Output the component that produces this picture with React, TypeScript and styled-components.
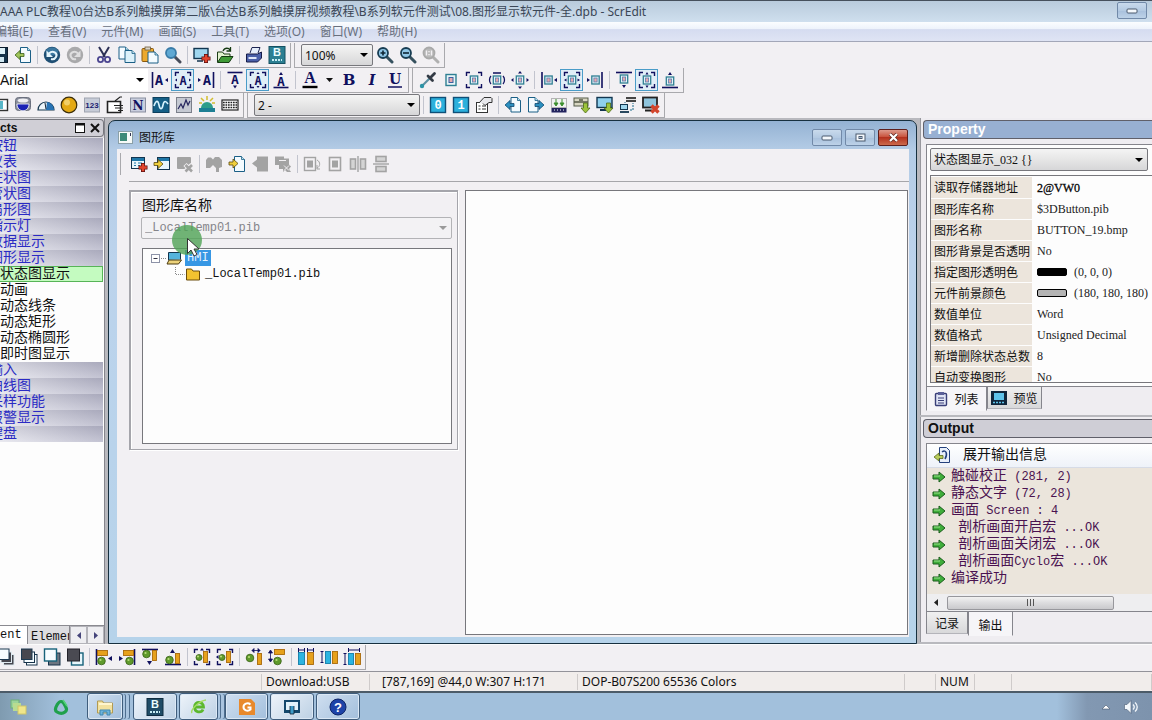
import React from "react";
import styled, { createGlobalStyle } from "styled-components";

const UI = `"Noto Sans", "Noto Sans CJK SC", sans-serif`;
const ARIAL = `"Liberation Sans", "Noto Sans CJK SC", sans-serif`;
const SONG = `"Liberation Mono", "Noto Sans CJK SC", monospace`;
const TIMES = `"Liberation Serif", "Noto Sans CJK SC", serif`;
const NAVY = "#10105e";
const GREY = "#a3a3a3";

const Global = createGlobalStyle`
  * { box-sizing: border-box; }
  body { margin: 0; background: #f2f0f3; font-family: ${UI}; font-size: 12px; color: #111; overflow: hidden; }
  button, select, input { font: inherit; color: inherit; margin: 0; padding: 0; border: 0; background: none; border-radius: 0; }
  svg { display: block; flex: none; }
`;

/* ---------- icon drawings, on an 18 x 18 grid ---------- */

const PlusRed = ({ x, y }: { x: number; y: number }) => (
  <>
    <path d={`M${x - 4.5} ${y}h9M${x} ${y - 4.5}v9`} stroke="#5a1010" strokeWidth="4" />
    <path d={`M${x - 3.8} ${y}h7.6M${x} ${y - 3.8}v7.6`} stroke="#e2452c" strokeWidth="2.6" />
  </>
);
const Win = ({ x = 1, y = 2, w = 13, h = 11 }: { x?: number; y?: number; w?: number; h?: number }) => (
  <>
    <rect x={x + 0.5} y={y + 0.5} width={w} height={h} fill="#e8f6fb" stroke="#12354f" />
    <rect x={x + 1} y={y + 1} width={w - 1} height="3" fill="#1f78a8" />
  </>
);
const Doc = ({ x, y, w = 9, h = 12, fill = "#f4fbff", stroke = "#1b5f86" }: { x: number; y: number; w?: number; h?: number; fill?: string; stroke?: string }) => (
  <>
    <path d={`M${x} ${y}h${w - 3}l3 3v${h - 3}h${-w}z`} fill={fill} stroke={stroke} />
    <path d={`M${x + w - 3} ${y}v3h3`} fill="#bfe3ef" stroke={stroke} strokeWidth=".8" />
  </>
);
const ArrowR = ({ x, y, c = "#f0cf3c", s = "#5b4a10" }: { x: number; y: number; c?: string; s?: string }) => (
  <path d={`M${x} ${y - 1.5}h4v-3l5 4.5l-5 4.5v-3h-4z`} fill={c} stroke={s} strokeWidth=".8" />
);
const ArrowL = ({ x, y, c = "#9fc45a", s = "#3c5f1a" }: { x: number; y: number; c?: string; s?: string }) => (
  <path d={`M${x + 9} ${y - 1.5}h-4v-3l-5 4.5l5 4.5v-3h4z`} fill={c} stroke={s} strokeWidth=".8" />
);
const Lens = ({ c = "#173c52", f = "#8fc6e6", sign = "", h = "#35505e" }: { c?: string; f?: string; sign?: string; h?: string }) => (
  <>
    <path d="M10.5 10.5l5.5 5.5" stroke={h} strokeWidth="3" strokeLinecap="round" />
    <circle cx="7" cy="7" r="5" fill={f} stroke={c} strokeWidth="1.8" />
    <path d={sign} stroke="#0d2433" strokeWidth="1.6" fill="none" />
  </>
);
const Brackets = ({ c = NAVY }: { c?: string }) => (
  <path d="M1.5 5v-3.5h3.5M13 1.5h3.5v3.5M16.5 13v3.5h-3.5M5 16.5h-3.5v-3.5" fill="none" stroke={c} strokeWidth="1.4" />
);
const LetterA = ({ x, y, s = 14 }: { x: number; y: number; s?: number }) => (
  <text x={x} y={y} fontFamily="DejaVu Sans Mono" fontWeight="bold" fontSize={s} textAnchor="middle" fill={NAVY}>A</text>
);
const Obj = ({ x = 9, y = 9 }: { x?: number; y?: number }) => (
  <>
    <rect x={x - 3.7} y={y - 4} width="7.4" height="8" fill="#e6f3f6" stroke="#2f7f93" strokeWidth="1.3" />
    <rect x={x - 1.6} y={y - 2} width="3.2" height="4" fill="#e7a9ae" stroke="#5b7fb0" strokeWidth=".8" />
  </>
);
const GreenBall = ({ x, y, r = 3.4 }: { x: number; y: number; r?: number }) => (
  <>
    <circle cx={x} cy={y} r={r} fill="#5f9a2c" stroke="#375f14" strokeWidth=".8" />
    <circle cx={x - 1} cy={y - 1} r="1.1" fill="#b9dc7a" />
  </>
);
const Bar = ({ x, y, w, h, c = "#e6a11c" }: { x: number; y: number; w: number; h: number; c?: string }) => (
  <rect x={x + 0.5} y={y + 0.5} width={w - 1} height={h - 1} fill={c} stroke={c === "#e6a11c" ? "#a8690a" : "#127da8"} strokeWidth=".9" />
);
const Stack = ({ top, backs, edge }: { top: string; backs: string; edge: string }) => (
  <>
    <rect x="6.5" y="6.5" width="10.5" height="10.5" fill={backs} stroke={edge} />
    <rect x="4" y="4" width="10.5" height="10.5" fill={backs} stroke={edge} />
    <rect x="1.5" y="1" width="10.5" height="10.5" fill={top} stroke="#1d3a52" />
  </>
);

const art: Record<string, React.ReactNode> = {
  save: <><rect x="1.5" y="1.5" width="15" height="15" fill="#16324a" stroke="#0c1c2c" /><rect x="4" y="2" width="10" height="6" fill="#dff1f8" /><rect x="5" y="11" width="8" height="5" fill="#cfe6f0" /></>,
  export: <><Doc x={6.5} y={1.5} w={10} h={15} /><ArrowL x={1} y={9} /></>,
  undo: <><circle cx="9" cy="9" r="8.2" fill="#1f4f74" /><ellipse cx="9" cy="5.5" rx="6" ry="4" fill="#4f93bc" opacity=".6" /><path d="M6 7.5c4-4 9 0 7 3.5c-1 2-3 2.5-5 2" fill="none" stroke="#e4f4fb" strokeWidth="2" /><path d="M3.5 4.5v6.5h6.5z" fill="#e4f4fb" /></>,
  redo: <><circle cx="9" cy="9" r="8.2" fill="#a9a9ab" /><path d="M12 7.5c-4-4-9 0-7 3.5c1 2 3 2.5 5 2" fill="none" stroke="#dededf" strokeWidth="2" /><path d="M14.5 4.5v6.5h-6.5z" fill="#dededf" /></>,
  cut: <><path d="M4 1l6 10M14 1l-6 10" stroke="#2b2f55" strokeWidth="2" /><circle cx="5.5" cy="13.5" r="2.6" fill="none" stroke="#4b4590" strokeWidth="1.8" /><circle cx="12.5" cy="13.5" r="2.6" fill="none" stroke="#4b4590" strokeWidth="1.8" /></>,
  copy: <><Doc x={1} y={1} w={9.5} h={12} /><Doc x={7} y={4.5} w={10} h={12} fill="#dcf1fa" /></>,
  paste: <><rect x="1" y="2.5" width="11.5" height="13" rx="1" fill="#eca92e" stroke="#8a5a10" /><rect x="4" y="1" width="5.5" height="3" fill="#d9d4c8" stroke="#6d5a3a" strokeWidth=".8" /><Doc x={7} y={6} w={10} h={11} /></>,
  find: <Lens f="#5fa8d3" c="#3a7ca8" h="#474c5a" />,
  addScreen: <><rect x="1" y="2.5" width="14" height="10" fill="#9fd6ee" stroke="#12354f" strokeWidth="1.4" /><path d="M4 15h6" stroke="#12354f" strokeWidth="1.5" /><PlusRed x={13} y={12.5} /></>,
  openScreen: <><path d="M1.5 16v-10h5l1.5 2h6v3" fill="#e2f2d0" stroke="#1d3d17" /><path d="M1.5 16.5l4-6h11.5l-4 6z" fill="#3f9a36" stroke="#153a12" /><path d="M7 5c2-4 6-3 7-1M14.5 1v4h-4" fill="none" stroke="#153a12" strokeWidth="1.3" /></>,
  print: <><path d="M5 7l2-5.5h8l-2 5.5" fill="#e6eefb" stroke="#1c2350" /><path d="M1.5 8h11l4-2v6l-4 4h-11z" fill="#4a5fa8" stroke="#161c48" /><path d="M3.5 12h8" stroke="#dfe6f8" strokeWidth="2" /></>,
  bmake: <><rect x="1" y="0.5" width="16" height="17" fill="#2c7f92" stroke="#155061" /><text x="9" y="10" fontFamily="Liberation Sans" fontWeight="bold" fontSize="11" textAnchor="middle" fill="#eafcff">B</text><path d="M4 14h10" stroke="#c6eef5" strokeWidth="2" strokeDasharray="2 1" /></>,
  bdark: <><rect x="1" y="0.5" width="16" height="17" fill="#1f4c66" stroke="#0f2c40" /><text x="9" y="10" fontFamily="Liberation Sans" fontWeight="bold" fontSize="11" textAnchor="middle" fill="#eafcff">B</text><path d="M4 14h10" stroke="#c6eef5" strokeWidth="2" strokeDasharray="2 1" /></>,
  zoomIn: <Lens sign="M4.5 7h5M7 4.5v5" />,
  zoomOut: <Lens sign="M4 7h6" />,
  zoomOne: (
    <>
      <path d="M10.5 10.5l5.5 5.5" stroke="#b0b0b0" strokeWidth="3" strokeLinecap="round" />
      <circle cx="7" cy="7" r="5.500" fill="#b9b9b9" stroke="#a9a9a9" strokeWidth="1.8" />
      <path d="M4.5 4.5v5M9.500 4.5v5M7 5v1.200M7 8v1.200" stroke="#f2f0f3" strokeWidth="1.400" />
    </>
  ),

  aLeft: <><path d="M1.5 1v16" stroke={NAVY} strokeWidth="1.6" /><LetterA x={8} y={14} /><path d="M14 9l3-2v4z" fill={NAVY} /></>,
  aCenter: <><Brackets /><LetterA x={9} y={13.5} s={12} /><path d="M1 9l2-1.5v3zM17 9l-2-1.5v3z" fill={NAVY} /></>,
  aRight: <><path d="M16.5 1v16" stroke={NAVY} strokeWidth="1.6" /><LetterA x={10} y={14} /><path d="M4 9l-3-2v4z" fill={NAVY} /></>,
  aTop: <><path d="M1.5 1.5h15" stroke={NAVY} strokeWidth="1.6" /><LetterA x={9} y={13} s={13} /><path d="M7 14.5h4l-2 3z" fill={NAVY} /></>,
  aMiddle: <><Brackets /><LetterA x={9} y={13.5} s={12} /><path d="M9 1l1.5 2h-3zM9 17l1.5-2h-3z" fill={NAVY} /></>,
  aBottom: <><path d="M1.5 16.5h15" stroke={NAVY} strokeWidth="1.6" /><LetterA x={9} y={15} s={13} /><path d="M7 4h4l-2-3z" fill={NAVY} /></>,
  aColor: <><text x="9" y="12" fontFamily="Liberation Serif" fontWeight="bold" fontSize="16" textAnchor="middle" fill={NAVY}>A</text><path d="M1.5 16h15" stroke="#000" strokeWidth="2.4" /></>,
  bold: <text x="9" y="14" fontFamily="DejaVu Serif" fontWeight="bold" fontSize="15" textAnchor="middle" fill={NAVY}>B</text>,
  italic: <text x="9" y="14" fontFamily="DejaVu Serif" fontWeight="bold" fontStyle="italic" fontSize="14" textAnchor="middle" fill={NAVY}>I</text>,
  underline: <><text x="9" y="12.5" fontFamily="DejaVu Serif" fontWeight="bold" fontSize="14" textAnchor="middle" fill={NAVY}>U</text><path d="M2 16h14" stroke={NAVY} strokeWidth="1.5" /></>,

  picker: <><path d="M2.5 15.5l8-8" stroke="#5b8fa2" strokeWidth="2.2" /><path d="M9 5l4.5 4.5M11.5 6.5l4-4" stroke="#333a44" strokeWidth="2.8" strokeLinecap="round" /><circle cx="3" cy="15" r="2.2" fill="#2c93a6" /></>,
  obj: <><rect x="4" y="3.5" width="10" height="11" fill="#e6f3f6" stroke="#2f7f93" strokeWidth="1.4" /><rect x="7" y="6.5" width="4" height="5" fill="#e7a9ae" stroke="#3b5fa0" /></>,
  objBoth: <><Brackets /><Obj /></>,
  objH: <><Obj /><path d="M3 5c-2 2-2 6 0 8M15 5c2 2 2 6 0 8M5 2h8M5 16h8" fill="none" stroke={NAVY} strokeWidth="1.3" /></>,
  objGrow: <><Obj /><path d="M9 0l2 2.5h-4zM9 18l2-2.5h-4zM0 9l2.5-2v4zM18 9l-2.5-2v4z" fill={NAVY} /></>,
  oLeft: <><path d="M2 1v16" stroke={NAVY} strokeWidth="1.6" /><Obj x={8.5} /><path d="M17 7v4l-3-2z" fill={NAVY} /></>,
  oCenter: <><Brackets /><Obj /><path d="M1 9l2.500-1.500v3zM17 9l-2.500-1.500v3z" fill={NAVY} /></>,
  oRight: <><path d="M16 1v16" stroke={NAVY} strokeWidth="1.6" /><Obj x={9.5} /><path d="M1 7v4l3-2z" fill={NAVY} /></>,
  oTop: <><path d="M1 1.5h16" stroke={NAVY} strokeWidth="1.6" /><Obj y={8} /><path d="M7 14h4l-2 3z" fill={NAVY} /></>,
  oMiddle: <><Brackets /><Obj /><path d="M9 1l1.500 2.500h-3zM9 17l1.500-2.500h-3z" fill={NAVY} /></>,
  oBottom: <><path d="M1 16.5h16" stroke={NAVY} strokeWidth="1.6" /><Obj y={10} /><path d="M7 4h4l-2-3z" fill={NAVY} /></>,

  panel: <><rect x="1" y="3.5" width="15.5" height="11" fill="#fff" stroke="#333" strokeWidth="1.4" /><rect x="3" y="5" width="9" height="8" fill="#58b6c8" /></>,
  tank: <><rect x="1.5" y="1.5" width="15" height="13" rx="3" fill="#8b8f9c" stroke="#6b707e" /><ellipse cx="9" cy="4.5" rx="5.5" ry="2" fill="#f0f0f4" /><path d="M3 8h12c0 9-12 9-12 0z" fill="#1a22b4" stroke="#fff" strokeWidth=".8" /></>,
  gauge: <><path d="M1 14a8 8 0 0 1 16 0z" fill="#eef6fb" stroke="#15364f" strokeWidth="1.2" /><path d="M9 14l1-8a8 8 0 0 1 7 8z" fill="#2873b4" /><path d="M9 13l-1-6" stroke="#123" /></>,
  lamp: <><circle cx="9" cy="9" r="7.8" fill="#e3a915" stroke="#3a2c08" strokeWidth="1.2" /><circle cx="7" cy="6.5" r="3" fill="#f8e08a" opacity=".7" /></>,
  num: <><rect x="1.5" y="2" width="15" height="14" fill="#c7ccd8" stroke="#9fa4b0" /><text x="9" y="12" fontFamily="Liberation Sans" fontWeight="bold" fontSize="8" textAnchor="middle" fill="#1b1b70">123</text></>,
  page: <><path d="M1.5 5.5h13v11h-13z" fill="#fff" stroke="#222" strokeWidth="1.6" /><path d="M9 5l5-4h2M8 9.5h9M9 12h8M12 14.5h5" stroke="#222" strokeWidth="1.2" fill="none" /></>,
  nbox: <><rect x="1.5" y="2" width="15" height="14" fill="#c9cede" stroke="#8a8fa0" /><text x="9" y="14" fontFamily="DejaVu Serif" fontWeight="bold" fontSize="12" textAnchor="middle" fill={NAVY}>N</text></>,
  wave: <><rect x="1" y="1.5" width="16" height="15" fill="#155f86" stroke="#0d3f5c" /><path d="M2 10c2-6 4-6 5-1s3 5 4 0s3-4 5-1" fill="none" stroke="#d8f4ff" strokeWidth="1.6" /></>,
  trend: <><rect x="1.5" y="1.5" width="15" height="15" fill="#c5c9d2" stroke="#7b7f8a" /><path d="M3 13l3-5l2 4l3-8l2 5l2-4" fill="none" stroke="#26265e" strokeWidth="1.2" /></>,
  alarm: <><path d="M3 12a6 6 0 0 1 12 0z" fill="#2f9d8a" /><path d="M1 12h16v4h-16z" fill="#1d7f94" /><path d="M9 0v4M3 2l3 3M15 2l-3 3M1 7h3M17 7h-3" stroke="#d2bd30" strokeWidth="1.5" /></>,
  keys: <><rect x="1" y="4" width="16" height="10" fill="#fff" stroke="#222" strokeWidth="1.2" /><path d="M2 6.5h14M2 9h14M2 11.5h14" stroke="#222" strokeWidth="1.6" strokeDasharray="1.7 .8" /></>,
  zero: <><rect x="1.5" y="1.5" width="15" height="15" fill="#2cb0dc" stroke="#0f4f78" strokeWidth="1.4" /><text x="9" y="13" fontFamily="Liberation Mono" fontWeight="bold" fontSize="12" textAnchor="middle" fill="#fff">0</text></>,
  one: <><rect x="1.5" y="1.5" width="15" height="15" fill="#2cb0dc" stroke="#0f4f78" strokeWidth="1.4" /><text x="9" y="13" fontFamily="Liberation Mono" fontWeight="bold" fontSize="12" textAnchor="middle" fill="#fff">1</text></>,
  hand: <><rect x="1.5" y="6.5" width="11" height="10" fill="#fff" stroke="#333" /><path d="M3.5 10h2M7 10h4M3.5 13h2M7 13h4" stroke="#333" /><path d="M4 7l5-5.5h7l1 1v4h-3l-4 3l-2-2" fill="#e8e8ec" stroke="#333" /></>,
  prev: <><Doc x={7} y={1.5} w={9.5} h={14.5} /><ArrowL x={1} y={9} c="#2c8fc0" s="#0f4a70" /></>,
  next: <><Doc x={1.5} y={1.5} w={9.5} h={14.5} /><ArrowR x={8} y={9} c="#2c8fc0" s="#0f4a70" /></>,
  compile: <><rect x="1.5" y="2.5" width="15" height="9" fill="#f2f2f2" stroke="#777" strokeDasharray="1 1" /><path d="M1.5 12h15v4.500h-15z" fill="#23235e" /><path d="M6 3v6M12 3v6M4 7l2 3l2-3zM10 7l2 3l2-3z" stroke="#3c8f2e" fill="#3c8f2e" /><path d="M4 14h1M7 14h1M10 14h1M13 14h1" stroke="#fff" /></>,
  dlData: <><rect x="1" y="2" width="14" height="8" fill="#d8d6c2" stroke="#555a48" /><path d="M1 6h14M6 4h4" stroke="#555a48" strokeWidth="1.4" /><path d="M10.5 7h4v5h2.5l-4.5 5l-4.5-5h2.5z" fill="#9dc33c" stroke="#4c6b16" strokeWidth=".8" /></>,
  dlScreen: <><rect x="1" y="1.5" width="15" height="10" fill="#8fd0ee" stroke="#12354f" strokeWidth="1.4" /><path d="M4 14h6" stroke="#12354f" strokeWidth="2" /><path d="M10.5 7h4v5h2.5l-4.5 5l-4.5-5h2.5z" fill="#9dc33c" stroke="#4c6b16" strokeWidth=".8" /></>,
  link: <><path d="M7 2h10M7 5h10" stroke="#444" strokeWidth="2.2" /><path d="M7 3.500h10" stroke="#ddd" strokeWidth=".8" /><rect x="1.5" y="8.5" width="7" height="5" fill="#9fd6ee" stroke="#12354f" /><path d="M1 16h9" stroke="#12354f" strokeWidth="1.8" /><path d="M11 14h3v-7M6 7v-1" stroke="#1b6b8a" fill="none" strokeDasharray="2 1" /></>,
  unlink: <><rect x="1" y="1.5" width="14" height="10" fill="#8fc4dc" stroke="#222" strokeWidth="1.8" /><path d="M3 14.5h7" stroke="#222" strokeWidth="2" /><path d="M9.5 9.5l7 7M16.5 9.5l-7 7" stroke="#d2452c" strokeWidth="3.4" /></>,

  libAdd: <><Win /><path d="M4 8h2M8 8h4M4 10.5h2M8 10.5h2" stroke="#1f78a8" /><PlusRed x={13} y={12.5} /></>,
  libOpen: <><Win x={4} y={2} w={12} h={12} /><ArrowR x={1} y={9} /></>,
  libDel: <><rect x="1" y="2" width="14" height="12" rx="1" fill={GREY} /><path d="M9 9.5l7 7M16 9.5l-7 7" stroke="#f2f0f3" strokeWidth="4.5" /><path d="M9.5 10l6.5 6.5M16 10l-6.5 6.5" stroke={GREY} strokeWidth="2.6" /></>,
  grpCopy: <path d="M1 5l2-2.5h3l2 2l2-2.5h4l3 3v7l-3 1v4h-3v-4l-3-3l-3 3h-4z" fill={GREY} />,
  docImport: <><Doc x={6.5} y={1.5} w={10} h={15} /><ArrowR x={1} y={8.5} /></>,
  docExport: <path d="M6 1.5h11v15h-11v-4l-5-4l5-4z" fill={GREY} />,
  docDel: <><path d="M1 1.5h9v2h5v6l2 2l-2 2.5l2 3h-4l-2-2l-2 2v-3h-4v-4h-4z" fill={GREY} /><path d="M5 5.5h7M10 10.5l5 5M15 10.5l-5 5" stroke="#f2f0f3" /></>,
  rotate: <><rect x="1.5" y="2.5" width="11" height="13" fill="none" stroke={GREY} strokeWidth="1.4" /><rect x="4" y="5.5" width="6" height="7" fill={GREY} /><path d="M14 5c4 2 3 7 0 8M14 10v4h3" fill="none" stroke={GREY} /></>,
  fit: <><rect x="3.5" y="2.5" width="11" height="13" fill="none" stroke={GREY} strokeWidth="1.6" /><rect x="6" y="5.5" width="6" height="7" fill={GREY} /></>,
  flipH: <><path d="M9 1v16" stroke={GREY} strokeWidth="1.4" /><rect x="1.5" y="4" width="5" height="10" fill="#d4d4d4" stroke={GREY} strokeWidth="1.6" /><rect x="11.5" y="4" width="5" height="10" fill="#d4d4d4" stroke={GREY} strokeWidth="1.6" /></>,
  flipV: <><path d="M1 9h16" stroke={GREY} strokeWidth="1.4" /><rect x="4" y="1.5" width="10" height="5" fill="#d4d4d4" stroke={GREY} strokeWidth="1.6" /><rect x="4" y="11.5" width="10" height="5" fill="#d4d4d4" stroke={GREY} strokeWidth="1.6" /></>,

  stackTop: <Stack top="#f6fcff" backs="#47474f" edge="#dfeaf0" />,
  stackBack: <Stack top="#47474f" backs="#f6fcff" edge="#16324a" />,
  stackUp: <><rect x="5.5" y="5" width="11.5" height="12" fill="#6d7580" stroke="#16324a" /><rect x="1.5" y="1" width="12" height="12" fill="#f6fcff" stroke="#16627a" strokeWidth="1.4" /></>,
  stackDown: <><rect x="5.5" y="5" width="11.5" height="12" fill="#e6f6fb" stroke="#16627a" strokeWidth="1.4" /><rect x="1.5" y="1" width="12" height="12" fill="#4a4a52" stroke="#22222a" /></>,
  alL: <><path d="M1.5 1v16" stroke={NAVY} strokeWidth="1.6" /><Bar x={2} y={2} w={11} h={6} /><GreenBall x={6.5} y={13} r={3.8} /><path d="M17 8v5l-4-2.5z" fill={NAVY} /></>,
  alR: <><path d="M16.5 1v16" stroke={NAVY} strokeWidth="1.6" /><Bar x={5} y={2} w={11} h={6} /><GreenBall x={11.5} y={13} r={3.8} /><path d="M1 8v5l4-2.5z" fill={NAVY} /></>,
  alT: <><path d="M1 1.5h16" stroke={NAVY} strokeWidth="1.6" /><Bar x={11} y={2} w={5} h={11} /><GreenBall x={5.5} y={6} r={3.8} /><path d="M6 13h5l-2.5 4z" fill={NAVY} /></>,
  alB: <><path d="M1 16.5h16" stroke={NAVY} strokeWidth="1.6" /><Bar x={11} y={5} w={5} h={11} /><GreenBall x={5.5} y={12} r={3.8} /><path d="M6 5h5l-2.5-4z" fill={NAVY} /></>,
  alC: <><Brackets /><Bar x={10} y={3} w={5} h={12} /><GreenBall x={6} y={9.5} r={3} /><path d="M9 0l2 2.5h-4z" fill={NAVY} /></>,
  alM: <><Brackets /><Bar x={10} y={3} w={5} h={12} /><GreenBall x={6} y={9.5} r={3} /><path d="M0 9l2.5-2v4z" fill={NAVY} /></>,
  spH: <><GreenBall x={5} y={10} r={3.8} /><Bar x={12} y={5} w={5} h={12} /><path d="M7 2.5h8M7 2.5l2-2v4zM15 2.5l-2-2v4z" stroke={NAVY} fill={NAVY} strokeWidth=".8" /></>,
  spV: <><GreenBall x={9.5} y={13} r={3.8} /><Bar x={6} y={1} w={11} h={6} /><path d="M2.5 3v10M2.5 2l-2 3h4zM2.5 14l-2-3h4z" stroke={NAVY} fill={NAVY} strokeWidth=".8" /></>,
  szW: <><Bar x={1} y={4} w={7} h={13} c="#2cb4e0" /><Bar x={10} y={4} w={7} h={13} /><path d="M1.5 0v4M7.5 0v4M1 2h7M10.5 0v4M16.5 0v4M10 2h7" stroke={NAVY} /></>,
  szH: <><Bar x={5} y={3} w={6} h={13} c="#2cb4e0" /><Bar x={12} y={3} w={6} h={13} /><path d="M2 3v12M0.5 3.5h3M0.5 14.5h3" stroke={NAVY} /></>,
  szB: <><Bar x={5} y={5} w={6} h={12} c="#2cb4e0" /><Bar x={12} y={5} w={6} h={12} /><path d="M2 5v12M0.5 5.5h3M0.5 16.5h3M5 2h12M5.5 0v4M16.5 0v4" stroke={NAVY} /></>,
};

const Ico = ({ name, size = 18 }: { name: string; size?: number }) => (
  <svg width={size} height={size} viewBox="0 0 18 18" aria-hidden="true">{art[name]}</svg>
);

/* ---------- shared parts ---------- */

const App = styled.div`
  min-height: 100vh;
  display: flex;
  flex-direction: column;
  overflow: hidden;
`;
const TitleBar = styled.header`
  height: 22px;
  flex: none;
  display: flex;
  align-items: center;
  justify-content: space-between;
  padding-bottom: 2px;
  border-top: 1px solid #46505c;
  background: linear-gradient(#b9cbdc, #cfdfee);
  color: #3a4656;
  white-space: nowrap;
  overflow: hidden;
`;
const WindowButtons = styled.div`
  display: flex;
  gap: 3px;
`;
const WinButton = styled.button<{ $close?: boolean }>`
  width: 30px;
  height: 17px;
  display: flex;
  align-items: center;
  justify-content: center;
  border: 1px solid ${(p) => (p.$close ? "#5e1f1c" : "#7189a8")};
  border-radius: 2px;
  background: ${(p) => (p.$close ? "linear-gradient(#dd9a8c, #c9543f 45%, #b4321f 50%, #cc6a4c)" : "linear-gradient(#c9daec, #b4cae2 50%, #a8c0dc 51%, #bdd2e8)")};
`;
const MainMin = styled(WinButton)`
  margin-right: 5px;
`;
const MenuBar = styled.nav`
  height: 20px;
  flex: none;
  display: flex;
  align-items: center;
  gap: 15px;
  margin-bottom: 1px;
  border-bottom: 1px solid #a3a7b8;
  background: linear-gradient(#fbfdff, #eef3fb 35%, #d5dcf0 40%, #dfe4f4);
  color: #68707e;
  overflow: hidden;
`;
const MenuItem = styled.button`
  flex: none;
  line-height: 18px;
  &:first-child { margin-left: -5px; }
`;
const ToolRow = styled.div`
  height: 25px;
  flex: none;
  display: flex;
`;
const ToolGroup = styled.div<{ $pull?: number; $gutter?: number }>`
  display: flex;
  align-items: center;
  flex: none;
  padding-left: ${(p) => (p.$pull ? 0 : p.$gutter ?? 3)}px;
  margin-left: ${(p) => (p.$pull ? -p.$pull : 3)}px;
  padding-right: 2px;
  border: 1px solid #a9a9ad;
  border-width: 0 1px 1px ${(p) => (p.$pull ? 0 : 1)}px;
`;
const ToolButton = styled.button<{ $on?: boolean; $w?: number }>`
  width: ${(p) => p.$w ?? 23}px;
  height: 22px;
  flex: none;
  display: flex;
  align-items: center;
  justify-content: center;
  border: 1px solid ${(p) => (p.$on ? "#4a9cc8" : "transparent")};
  background: ${(p) => (p.$on ? "#e0eef7" : "transparent")};
`;
const Divider = styled.span`
  width: 1px;
  height: 18px;
  flex: none;
  margin: 0 2px 0 3px;
  background: #c2c4ce;
`;
const SelectBox = styled.div<{ $w?: number; $flat?: boolean; $dim?: boolean; $h?: number }>`
  position: relative;
  width: ${(p) => (p.$w ? `${p.$w}px` : "auto")};
  height: ${(p) => p.$h ?? 22}px;
  flex: none;
  border: ${(p) => (p.$flat ? "0" : `1px solid ${p.$dim ? "#b3b3b6" : "#77777c"}`)};
  border-radius: ${(p) => (p.$flat ? 0 : 2)}px;
  background: ${(p) => (p.$flat ? "#fff" : p.$dim ? "#f3f2f4" : "linear-gradient(#f4f4f4, #e6e6e6 50%, #d6d6d8)")};
  &::after {
    content: "";
    position: absolute;
    right: 4px;
    top: calc(50% - 2px);
    border: 4px solid transparent;
    border-top-color: ${(p) => (p.$dim ? "#9a9a9a" : "#000")};
    border-bottom: 0;
    pointer-events: none;
  }
`;
const Select = styled.select<{ $font?: string; $size?: number; $pad?: number }>`
  appearance: none;
  width: 100%;
  height: 100%;
  padding-left: ${(p) => p.$pad ?? 3}px;
  font-family: ${(p) => p.$font ?? UI};
  font-size: ${(p) => p.$size ?? 12}px;
  &:disabled { opacity: 1; color: #85858a; }
`;

const Tools = ({ items, on = [] }: { items: string; on?: string[] }) => (
  <>
    {items.split(" ").map((n, i) =>
      n === "|" ? <Divider key={i} /> : (
        <ToolButton key={i} aria-label={n} $on={on.includes(n)}><Ico name={n} /></ToolButton>
      ),
    )}
  </>
);

/* ---------- workspace ---------- */

const Workspace = styled.main`
  flex: 1 0 525px;
  display: flex;
  background: #b9b9be;
`;
const Side = styled.aside`
  width: 105px;
  flex: none;
  display: flex;
  flex-direction: column;
  margin-right: 3px;
  border-right: 1px solid #85858c;
  background: #dcdbe0;
  overflow: hidden;
`;
const SideHead = styled.div`
  height: 18px;
  margin: 1px 0;
  flex: none;
  display: flex;
  align-items: center;
  gap: 5px;
  padding-right: 3px;
  border: 1px solid #77777e;
  border-left: 0;
  border-radius: 0 4px 4px 0;
  background: #d0cfd6;
  font: bold 12px/16px ${ARIAL};
`;
const HeadText = styled.span`
  flex: 1;
`;
const Tree = styled.ul`
  flex: 1;
  margin: 0;
  padding: 0 1px 0 0;
  list-style: none;
  background: #fdfdfd;
  font: 14px/16px ${SONG};
  white-space: nowrap;
`;
const Group = styled.li`
  height: 16px;
  text-indent: -11px;
  color: #2a2ac4;
  overflow: hidden;
  background: linear-gradient(90deg, rgba(255, 255, 255, 0.35), rgba(120, 120, 150, 0.25)), linear-gradient(#b9b9c8, #dedee8);
`;
const Leaf = styled.li<{ $on?: boolean }>`
  height: 16px;
  line-height: ${(p) => (p.$on ? 14 : 16)}px;
  border: ${(p) => (p.$on ? "1px solid #57b457" : "0")};
  border-left: 0;
  background: ${(p) => (p.$on ? "#c4fbc0" : "transparent")};
`;
const SideTabs = styled.div`
  height: 19px;
  flex: none;
  display: flex;
  border-top: 1px solid #8a8a90;
  font: 12px/18px ${SONG};
  overflow: hidden;
`;
const SideTab = styled.button<{ $on?: boolean; $w: number }>`
  width: ${(p) => p.$w}px;
  flex: none;
  text-align: left;
  padding: ${(p) => (p.$on ? "0" : "2px 0 0 3px")};
  border-right: 1px solid #8a8a90;
  background: ${(p) => (p.$on ? "#fff" : "#dddde0")};
  overflow: hidden;
  white-space: nowrap;
`;
const Spin = styled.button`
  flex: 1;
  display: flex;
  align-items: center;
  justify-content: center;
  border: 1px solid #b4b4ba;
  background: #eeeef1;
`;

const Mdi = styled.section`
  position: relative;
  flex: 1;
  min-width: 0;
  display: flex;
  flex-direction: column;
  margin-top: 2px;
  padding: 0 7px 6px 8px;
  border: 1px solid #17303f;
  border-radius: 7px 7px 0 0;
  background: linear-gradient(#94b2d3, #b4cce6 29px, #bcd3ec 140px, #b6d3ea);
`;
const MdiTitle = styled.div`
  height: 28px;
  flex: none;
  display: flex;
  align-items: center;
  gap: 6px;
  padding: 4px 1px 0 1px;
`;
const MdiBody = styled.div`
  flex: 1;
  display: flex;
  flex-direction: column;
  background: #f2f0f3;
`;
const MdiTools = styled.div`
  height: 32px;
  flex: none;
  display: flex;
  align-items: center;
  padding: 0 0 2px 10px;
`;
const Grip = styled.span`
  width: 1px;
  height: 22px;
  margin: 0 6px 0 -7px;
  background: #a9a9ad;
`;
const MdiColumns = styled.div`
  flex: 1;
  display: flex;
  gap: 7px;
  margin-left: 12px;
  padding: 8px 1px 2px 0;
  border-top: 1px solid #a6a6aa;
`;
const LibraryBox = styled.fieldset`
  width: 329px;
  height: 260px;
  flex: none;
  display: flex;
  flex-direction: column;
  margin: 0;
  padding: 5px 5px 5px 10px;
  border: 2px solid #a5a5ab;
  border-width: 2px 1px 1px 2px;
  box-shadow: inset 1px 1px #fff, 1px 1px #fff;
`;
const LibraryLabel = styled.label`
  font: 14px/19px ${SONG};
  margin: 0 0 1px 1px;
`;
const LibraryTree = styled.ul`
  flex: 1;
  margin: 9px 0 0 1px;
  padding: 1px 0 0 8px;
  list-style: none;
  border: 1px solid #77777c;
  background: #fdfdfd;
  font: 12px/16px ${SONG};
`;
const TreeRow = styled.li<{ $deep?: boolean }>`
  height: 16px;
  display: flex;
  align-items: center;
  gap: ${(p) => (p.$deep ? 4 : 2)}px;
  padding-left: ${(p) => (p.$deep ? 23 : 0)}px;
`;
const Chosen = styled.span`
  padding: 0 2px;
  background: #3797e4;
  color: #e6f3ff;
`;
const Preview = styled.div`
  flex: 1;
  border: 1px solid #77777c;
  background: #fdfdfd;
`;
const Pointer = styled.svg`
  position: absolute;
  left: 62px;
  top: 102px;
  pointer-events: none;
`;

const Right = styled.div`
  width: 235px;
  flex: none;
  display: flex;
  flex-direction: column;
  padding-left: 3px;
`;
const Dock = styled.section<{ $grow: number }>`
  flex: ${(p) => p.$grow} 0 0;
  min-height: 0;
  display: flex;
  flex-direction: column;
  margin-bottom: 2px;
  padding: 1px 0 0 2px;
  background: #efedf1;
  border-left: 1px solid #98989e;
`;
const DockHead = styled.h2<{ $blue?: boolean }>`
  height: 19px;
  flex: none;
  margin: 1px 0 5px;
  padding-left: 4px;
  border: 1px solid #60606a;
  border-right: 0;
  border-radius: 4px 0 0 4px;
  background: ${(p) => (p.$blue ? "#98b0d2" : "#cfced6")};
  color: ${(p) => (p.$blue ? "#fff" : "#111")};
  font: bold 14px/17px ${ARIAL};
`;
const DockBody = styled.div`
  flex: 1;
  min-height: 0;
  display: flex;
  flex-direction: column;
  margin-left: 3px;
  border: 1px solid #85858c;
  border-width: 1px 0 1px 1px;
  background: #fdfdfd;
  overflow: hidden;
`;
const PropTop = styled.div`
  padding: 3px 4px 4px 3px;
`;
const GridClip = styled.div`
  flex: 1;
  min-height: 0;
  margin: 0 0 3px 3px;
  padding-top: 1px;
  border: 1px solid #77777c;
  border-width: 1px 0 1px 1px;
  overflow: hidden;
`;
const PropTable = styled.table`
  width: 100%;
  border-collapse: collapse;
  table-layout: fixed;
  font: 12px/20px ${TIMES};
  white-space: nowrap;
`;
const PropName = styled.th`
  width: 101px;
  height: 21px;
  padding: 2px 0 0 3px;
  border-bottom: 1px solid #fdfdfd;
  background: #ece5dc;
  text-align: left;
  font-weight: normal;
  line-height: 18px;
  overflow: hidden;
`;
const PropValue = styled.td<{ $strong?: boolean }>`
  padding: 0 0 0 5px;
  line-height: 18px;
  color: ${(p) => (p.$strong ? "#000" : "#222")};
  -webkit-text-stroke: ${(p) => (p.$strong ? "0.3px #111" : "0")};
`;
const Swatch = styled.span<{ $c: string }>`
  display: inline-block;
  width: 30px;
  height: 8px;
  margin-right: 7px;
  border: 1px solid #000;
  border-radius: 2px;
  background: ${(p) => p.$c};
`;
const DockTabs = styled.div<{ $h: number }>`
  height: ${(p) => p.$h}px;
  flex: none;
  display: flex;
  align-items: flex-start;
  margin-left: 3px;
`;
const DockTab = styled.button<{ $on?: boolean; $w: number }>`
  width: ${(p) => p.$w}px;
  height: ${(p) => (p.$on ? 24 : 22)}px;
  display: flex;
  align-items: center;
  justify-content: center;
  gap: 6px;
  padding-top: ${(p) => (p.$on ? 2 : 1)}px;
  border: 1px solid #85858c;
  border-top-width: 0;
  border-bottom-color: ${(p) => (p.$on ? "transparent" : "#b4b4ba")};
  background: ${(p) => (p.$on ? "#f6f5f8" : "linear-gradient(#f0f0f0, #d8d8da)")};
`;
const OutHead = styled.div`
  height: 24px;
  flex: none;
  display: flex;
  align-items: center;
  gap: 12px;
  padding-left: 6px;
  border-bottom: 1px solid #d6dbe6;
  background: linear-gradient(#fff, #eef2f9);
  font: 14px/20px ${SONG};
`;
const OutList = styled.ul`
  flex: 1;
  margin: 0;
  padding: 1px 0 0 5px;
  list-style: none;
  background: #ebe5dc;
  color: #4a1250;
  font: 12px/17px ${SONG};
  white-space: pre;
`;
const OutRow = styled.li`
  height: 17px;
  display: flex;
  align-items: center;
  gap: 5px;
`;
const Cjk = styled.span`
  font-size: 14px;
`;
const ScrollBar = styled.div`
  height: 17px;
  flex: none;
  display: flex;
  align-items: center;
  gap: 6px;
  padding-left: 5px;
  background: #eeeef0;
`;
const Thumb = styled.div`
  width: 167px;
  height: 14px;
  display: flex;
  align-items: center;
  justify-content: center;
  border: 1px solid #97979c;
  border-radius: 2px;
  background: linear-gradient(#f2f2f2, #dcdcde 50%, #c9c9cc);
`;

const BottomTools = styled(ToolRow)`
  height: 26px;
  border-top: 1px solid #fbfbfb;
`;
const Status = styled.footer`
  height: 22px;
  flex: none;
  display: flex;
  align-items: center;
  margin-top: 1px;
  border: 1px solid #93939a;
  border-width: 1px 0 2px;
  border-bottom-color: #4c5b68;
  background: #f1edeb;
`;
const StatusCell = styled.span<{ $w?: number; $pad?: number }>`
  ${(p) => (p.$w ? `width: ${p.$w}px; flex: none;` : "flex: 1;")}
  height: 16px;
  line-height: 16px;
  padding-left: ${(p) => p.$pad ?? 4}px;
  border-right: 1px solid #cfcbca;
  white-space: nowrap;
`;
const TaskBar = styled.footer`
  height: 27px;
  flex: none;
  display: flex;
  align-items: stretch;
  background: linear-gradient(90deg, #7f9bb0, #a2c0dc 60px, #a2c0dc calc(100% - 95px), #8298b2 calc(100% - 65px), #7d93ad);
`;
const TaskItem = styled.button<{ $w: number; $box?: boolean; $stack?: boolean; $lit?: boolean; $gap?: number }>`
  width: ${(p) => p.$w}px;
  flex: none;
  display: flex;
  align-items: center;
  justify-content: center;
  margin-right: ${(p) => p.$gap ?? 2}px;
  border: ${(p) => (p.$box ? "1px solid #3f5d7c" : "0")};
  border-radius: 3px;
  background: ${(p) => (p.$box ? `linear-gradient(135deg, ${p.$lit ? "#eef4fa, #bcd0e4" : "#cfdff0, #a3bfdc"})` : "none")};
  box-shadow: ${(p) => (p.$box ? "inset 0 0 0 1px #dbe8f5" : "none")}${(p) => (p.$stack ? ", 3px 0 0 -1px #a9c4df, 4px 0 0 -1px #4f6f90, 7px 0 0 -1px #a9c4df, 8px 0 0 -1px #4f6f90" : "")};
`;
const Tray = styled.div`
  flex: 1;
  display: flex;
  align-items: center;
  justify-content: flex-end;
  gap: 12px;
  padding-right: 13px;
`;
const TrayButton = styled.button`
  display: flex;
`;

/* ---------- data ---------- */

const menus = ["编辑(E)", "查看(V)", "元件(M)", "画面(S)", "工具(T)", "选项(O)", "窗口(W)", "帮助(H)"];
const groupsAbove = ["按钮", "仪表", "柱状图", "管状图", "扇形图", "指示灯", "数据显示", "图形显示"];
const leaves = ["状态图显示", "动画", "动态线条", "动态矩形", "动态椭圆形", "即时图显示"];
const groupsBelow = ["输入", "曲线图", "采样功能", "报警显示", "键盘"];
const props: { name: string; value: string; color?: string }[] = [
  { name: "读取存储器地址", value: "2@VW0" },
  { name: "图形库名称", value: "$3DButton.pib" },
  { name: "图形名称", value: "BUTTON_19.bmp" },
  { name: "图形背景是否透明", value: "No" },
  { name: "指定图形透明色", value: "(0, 0, 0)", color: "#000" },
  { name: "元件前景颜色", value: "(180, 180, 180)", color: "#b4b4b4" },
  { name: "数值单位", value: "Word" },
  { name: "数值格式", value: "Unsigned Decimal" },
  { name: "新增删除状态总数", value: "8" },
  { name: "自动变换图形", value: "No" },
];
const output: [string, string, string, string][] = [
  ["", "触碰校正", " (281, 2)", ""],
  ["", "静态文字", " (72, 28)", ""],
  ["", "画面", " Screen : 4", ""],
  [" ", "剖析画面开启宏", " ...OK", ""],
  [" ", "剖析画面关闭宏", " ...OK", ""],
  [" ", "剖析画面", "Cyclo", "宏"],
  ["", "编译成功", "", ""],
];

const MinGlyph = () => (
  <svg width="12" height="7"><rect x="1" y="2" width="10" height="4" rx="1" fill="#f4f8fc" stroke="#4b5a6e" /></svg>
);

export default function ScrEdit() {
  return (
    <App>
      <Global />
      <TitleBar>
        <span>AAA PLC教程\0台达B系列触摸屏第二版\台达B系列触摸屏视频教程\B系列软元件测试\08.图形显示软元件-全.dpb - ScrEdit</span>
        <MainMin aria-label="Minimize"><MinGlyph /></MainMin>
      </TitleBar>
      <MenuBar>{menus.map((m) => <MenuItem key={m}>{m}</MenuItem>)}</MenuBar>

      <ToolRow>
        <ToolGroup $pull={12}><Tools items="save export | undo redo | cut copy paste find | addScreen openScreen | print bmake" /></ToolGroup>
        <ToolGroup $gutter={6}>
          <SelectBox $w={72}>
            <Select aria-label="Zoom"><option>100%</option></Select>
          </SelectBox>
          <Tools items="zoomIn zoomOut zoomOne" />
        </ToolGroup>
      </ToolRow>
      <ToolRow>
        <ToolGroup $pull={12}>
          <SelectBox $w={160} $flat>
            <Select aria-label="Font" $font={ARIAL} $size={14} $pad={12}><option>Arial</option></Select>
          </SelectBox>
          <Tools items="aLeft aCenter aRight | aTop aMiddle aBottom | aColor" on={["aCenter", "aMiddle"]} />
          <ToolButton $w={16} aria-label="Text colour list"><svg width="7" height="4"><path d="M0 0h7l-3.500 4z" fill="#111" /></svg></ToolButton>
          <Tools items="bold italic underline" />
        </ToolGroup>
        <ToolGroup>
          <Tools items="picker obj objBoth objH objGrow | oLeft oCenter oRight | oTop oMiddle oBottom" on={["oCenter", "oMiddle"]} />
        </ToolGroup>
      </ToolRow>
      <ToolRow>
        <ToolGroup $pull={12}><Tools items="panel tank gauge lamp num page nbox wave trend alarm keys" /></ToolGroup>
        <ToolGroup $gutter={6}>
          <SelectBox $w={166}>
            <Select aria-label="State"><option>2 -</option></Select>
          </SelectBox>
          <Divider />
          <Tools items="zero one hand | prev next compile dlData dlScreen link unlink" />
        </ToolGroup>
      </ToolRow>

      <Workspace>
        <Side>
          <SideHead>
            <HeadText>cts</HeadText>
            <svg width="10" height="10"><rect x="0.5" y="0.5" width="9" height="9" fill="#fff" stroke="#111" /><path d="M0 1.5h10" stroke="#111" strokeWidth="2" /></svg>
            <svg width="10" height="10"><path d="M1 1l8 8M9 1l-8 8" stroke="#111" strokeWidth="2" /></svg>
          </SideHead>
          <Tree>
            {groupsAbove.map((g) => <Group key={g}>{g}</Group>)}
            {leaves.map((g, i) => <Leaf key={g} $on={i === 0}>{g}</Leaf>)}
            {groupsBelow.map((g) => <Group key={g}>{g}</Group>)}
          </Tree>
          <SideTabs>
            <SideTab $on $w={28}>ent</SideTab>
            <SideTab $w={42}>Element</SideTab>
            <Spin aria-label="Previous tab"><svg width="4" height="7"><path d="M4 0v7l-4-3.500z" fill="#45457a" /></svg></Spin>
            <Spin aria-label="Next tab"><svg width="4" height="7"><path d="M0 0v7l4-3.500z" fill="#45457a" /></svg></Spin>
          </SideTabs>
        </Side>

        <Mdi>
          <MdiTitle>
            <svg width="15" height="13"><rect x="0.5" y="0.5" width="14" height="12" fill="#f6faf8" stroke="#8ba0a8" /><rect x="2" y="2" width="7" height="8" fill="#3d8a78" /><path d="M12.5 2v3" stroke="#335" /></svg>
            <HeadText>图形库</HeadText>
            <WindowButtons>
              <WinButton aria-label="Minimize"><MinGlyph /></WinButton>
              <WinButton aria-label="Restore"><svg width="11" height="9"><rect x="1" y="1" width="9" height="7" fill="#f4f8fc" stroke="#4b5a6e" /><rect x="4" y="3.5" width="3" height="2" fill="#9fb4cc" stroke="#4b5a6e" /></svg></WinButton>
              <WinButton aria-label="Close" $close><svg width="11" height="9"><path d="M2 1l7 7M9 1l-7 7" stroke="#5e2a24" strokeWidth="3.6" /><path d="M2 1l7 7M9 1l-7 7" stroke="#fff" strokeWidth="2.2" /></svg></WinButton>
            </WindowButtons>
          </MdiTitle>
          <MdiBody>
            <MdiTools>
              <Grip />
              <Tools items="libAdd libOpen libDel | grpCopy docImport docExport docDel | rotate fit flipH flipV" />
            </MdiTools>
            <MdiColumns>
              <LibraryBox>
                <LibraryLabel htmlFor="library">图形库名称</LibraryLabel>
                <SelectBox $dim>
                  <Select id="library" $font={SONG} disabled><option>_LocalTemp01.pib</option></Select>
                </SelectBox>
                <LibraryTree>
                  <TreeRow>
                    <svg width="32" height="14">
                      <rect x="0.5" y="3.5" width="8" height="8" fill="#fff" stroke="#8d93a8" /><path d="M2.5 7.5h4" stroke="#334" />
                      <path d="M10 7.5h5" stroke="#888" strokeDasharray="1 1" />
                      <path d="M17.5 9v-7.500h12v7" fill="#55b4dc" stroke="#12354f" /><path d="M16 13l2-4h12.500l-3 4z" fill="#ecd27a" stroke="#4b3a10" />
                    </svg>
                    <Chosen>HMI</Chosen>
                  </TreeRow>
                  <TreeRow $deep>
                    <svg width="27" height="14">
                      <path d="M1.5 0v7.500h9" fill="none" stroke="#888" strokeDasharray="1 1" />
                      <path d="M12.5 3v-1h5l1.500 2h6.500v9h-13z" fill="#f2c230" stroke="#6b4d0c" />
                    </svg>
                    _LocalTemp01.pib
                  </TreeRow>
                </LibraryTree>
              </LibraryBox>
              <Preview />
            </MdiColumns>
          </MdiBody>
          <Pointer width="34" height="40" viewBox="0 0 34 40">
            <circle cx="16" cy="17" r="15" fill="#4fa355" opacity=".8" />
            <path d="M16.5 15.5v15l3.500-3.500l3 6l3-1.500l-3-5.500h5z" fill="#fff" stroke="#333" />
          </Pointer>
        </Mdi>

        <Right>
          <Dock $grow={297}>
            <DockHead $blue>Property</DockHead>
            <DockBody>
              <PropTop>
                <SelectBox $w={218} $h={23}>
                  <Select aria-label="Element" $font={TIMES}><option>状态图显示_032 {"{}"}</option></Select>
                </SelectBox>
              </PropTop>
              <GridClip>
                <PropTable>
                  <tbody>
                    {props.map((p, i) => (
                      <tr key={p.name}>
                        <PropName scope="row">{p.name}</PropName>
                        <PropValue $strong={i === 0}>{p.color && <Swatch $c={p.color} />}{p.value}</PropValue>
                      </tr>
                    ))}
                  </tbody>
                </PropTable>
              </GridClip>
            </DockBody>
            <DockTabs $h={28}>
              <DockTab $on $w={61}>
                <svg width="14" height="16"><rect x="1.5" y="2.5" width="11" height="12" rx="1" fill="#dfe3f4" stroke="#3a3f78" strokeWidth="1.4" /><rect x="4" y="1" width="6" height="3" fill="#5a5f98" /><path d="M4 7h6M4 9.5h6M4 12h6" stroke="#3a3f78" /></svg>
                列表
              </DockTab>
              <DockTab $w={55}>
                <svg width="16" height="14"><rect x="0" y="0" width="16" height="14" fill="#10263c" /><rect x="3" y="2" width="10" height="7" fill="#5fc3ea" /><path d="M2 11.5h12" stroke="#5fc3ea" strokeWidth="1.5" strokeDasharray="2 1" /></svg>
                预览
              </DockTab>
            </DockTabs>
          </Dock>
          <Dock $grow={225}>
            <DockHead>Output</DockHead>
            <DockBody>
              <OutHead>
                <svg width="18" height="18"><path d="M6.5 1.5h7l3 3v12h-10z" fill="#e8effa" stroke="#23407c" /><path d="M9 6c4-3 6 2 3 7" fill="none" stroke="#23407c" strokeWidth="1.5" /><path d="M1 11l5-4v2.500h4v3h-4v2.500z" fill="#b8cc5c" stroke="#5b6b1c" strokeWidth=".8" /></svg>
                展开输出信息
              </OutHead>
              <OutList>
                {output.map(([lead, a, b, c]) => (
                  <OutRow key={a + b + c}>
                    <svg width="14" height="12"><path d="M1 4h6v-3l6 5l-6 5v-3h-6z" fill="#3fae3a" stroke="#1a5c1c" /><path d="M2 5h6" stroke="#9be08c" /></svg>
                    <span>{lead}<Cjk>{a}</Cjk>{b}{c && <><Cjk>{c}</Cjk> ...OK</>}</span>
                  </OutRow>
                ))}
              </OutList>
              <ScrollBar>
                <svg width="9" height="7"><path d="M6 0v7l-4-3.500z" fill="#222" /></svg>
                <Thumb><svg width="9" height="7"><path d="M1.5 0v7M4.5 0v7M7.5 0v7" stroke="#555" /></svg></Thumb>
              </ScrollBar>
            </DockBody>
            <DockTabs $h={30}>
              <DockTab $w={42}>记录</DockTab>
              <DockTab $on $w={45}>输出</DockTab>
            </DockTabs>
          </Dock>
        </Right>
      </Workspace>

      <BottomTools>
        <ToolGroup $pull={6}>
          <Tools items="stackTop stackBack stackUp stackDown | alL alR alT alB | alC alM | spH spV | szW szH szB" />
        </ToolGroup>
      </BottomTools>
      <Status>
        <StatusCell $w={262} />
        <StatusCell $w={108}>Download:USB</StatusCell>
        <StatusCell $w={208} $pad={12}>[787,169] @44,0 W:307 H:171</StatusCell>
        <StatusCell>DOP-B07S200 65536 Colors</StatusCell>
        <StatusCell $w={31} />
        <StatusCell $w={39}>NUM</StatusCell>
        <StatusCell $w={37} />
        <StatusCell $w={140} />
      </Status>
      <TaskBar>
        <TaskItem $w={35} aria-label="Notes"><svg width="18" height="18"><rect x="2" y="2" width="8" height="8" fill="#9cd49a" stroke="#6cae78" /><rect x="4" y="5" width="8" height="8" fill="#b8dc90" /><rect x="9" y="8" width="8" height="8" fill="#efe68a" stroke="#cfc668" /></svg></TaskItem>
        <TaskItem $w={48} aria-label="Browser"><svg width="18" height="18"><path d="M9 3.5c2 0 2.5 1 4 4s2.5 4.5 0 6.5s-5.5 1.5-8 0s-1.5-4.5 0-7s2-3.5 4-3.5z" fill="none" stroke="#1fa04c" strokeWidth="3.2" /><path d="M11 2l4 6" stroke="#56d27c" strokeWidth="1.5" /></svg></TaskItem>
        <TaskItem $w={36} $box $stack $gap={10} aria-label="Explorer"><svg width="18" height="18"><path d="M1.5 15v-12h5l1 2h9v10z" fill="#f3e2a0" stroke="#b29a52" /><path d="M3 6h13" stroke="#fff6cf" strokeWidth="2" /><path d="M4 17v-5h10v5h-3v-3h-4v3z" fill="#6db4dc" stroke="#3f86b0" /></svg></TaskItem>
        <TaskItem $w={44} $box $lit aria-label="ScrEdit"><Ico name="bdark" /></TaskItem>
        <TaskItem $w={39} $box $stack $lit $gap={7} aria-label="Internet"><svg width="18" height="18"><path d="M4 9h9.500c0-6-9-6-9 0s7 6 8.500 2.500" fill="none" stroke="#5cb82e" strokeWidth="2.8" /><path d="M2 15c-2-3 7-12 14-13" fill="none" stroke="#a3dc62" strokeWidth="1.5" /></svg></TaskItem>
        <TaskItem $w={43} $box aria-label="Document"><svg width="18" height="18"><path d="M1 1h12l4 4v12h-16z" fill="#e8892c" /><path d="M12.5 6.5c-3-2.500-7-.5-7 2.500s4 5 7 2.500v-2h-3" fill="none" stroke="#fff" strokeWidth="2" /></svg></TaskItem>
        <TaskItem $w={44} $box $lit aria-label="Remote"><svg width="18" height="18"><rect x="1" y="2" width="16" height="13" fill="#14486c" /><rect x="3" y="4" width="12" height="8" fill="#e2f2fa" /><path d="M7 8v8h4v-8" fill="#3f9cc8" stroke="#123" strokeWidth=".8" /></svg></TaskItem>
        <TaskItem $w={44} $box aria-label="Help"><svg width="18" height="18"><circle cx="9" cy="9" r="8" fill="#1d43a8" stroke="#0d2466" /><text x="9" y="14" fontFamily="Liberation Sans" fontWeight="bold" fontSize="13" textAnchor="middle" fill="#fff">?</text></svg></TaskItem>
        <Tray>
          <TrayButton aria-label="Show hidden icons"><svg width="10" height="6"><path d="M1 5l4-4l4 4z" fill="#fff" stroke="#44566c" strokeWidth=".6" /></svg></TrayButton>
          <TrayButton aria-label="Volume"><svg width="16" height="16"><path d="M1.5 5.5h2.500l4-4v13l-4-4h-2.500z" fill="#f4f8fc" stroke="#4a5c74" strokeWidth=".6" /><path d="M10 5.5c1.500 1.500 1.500 3.500 0 5M12 3.5c3 2.500 3 6.500 0 9" fill="none" stroke="#f4f8fc" strokeWidth="1.3" /></svg></TrayButton>
        </Tray>
      </TaskBar>
    </App>
  );
}
